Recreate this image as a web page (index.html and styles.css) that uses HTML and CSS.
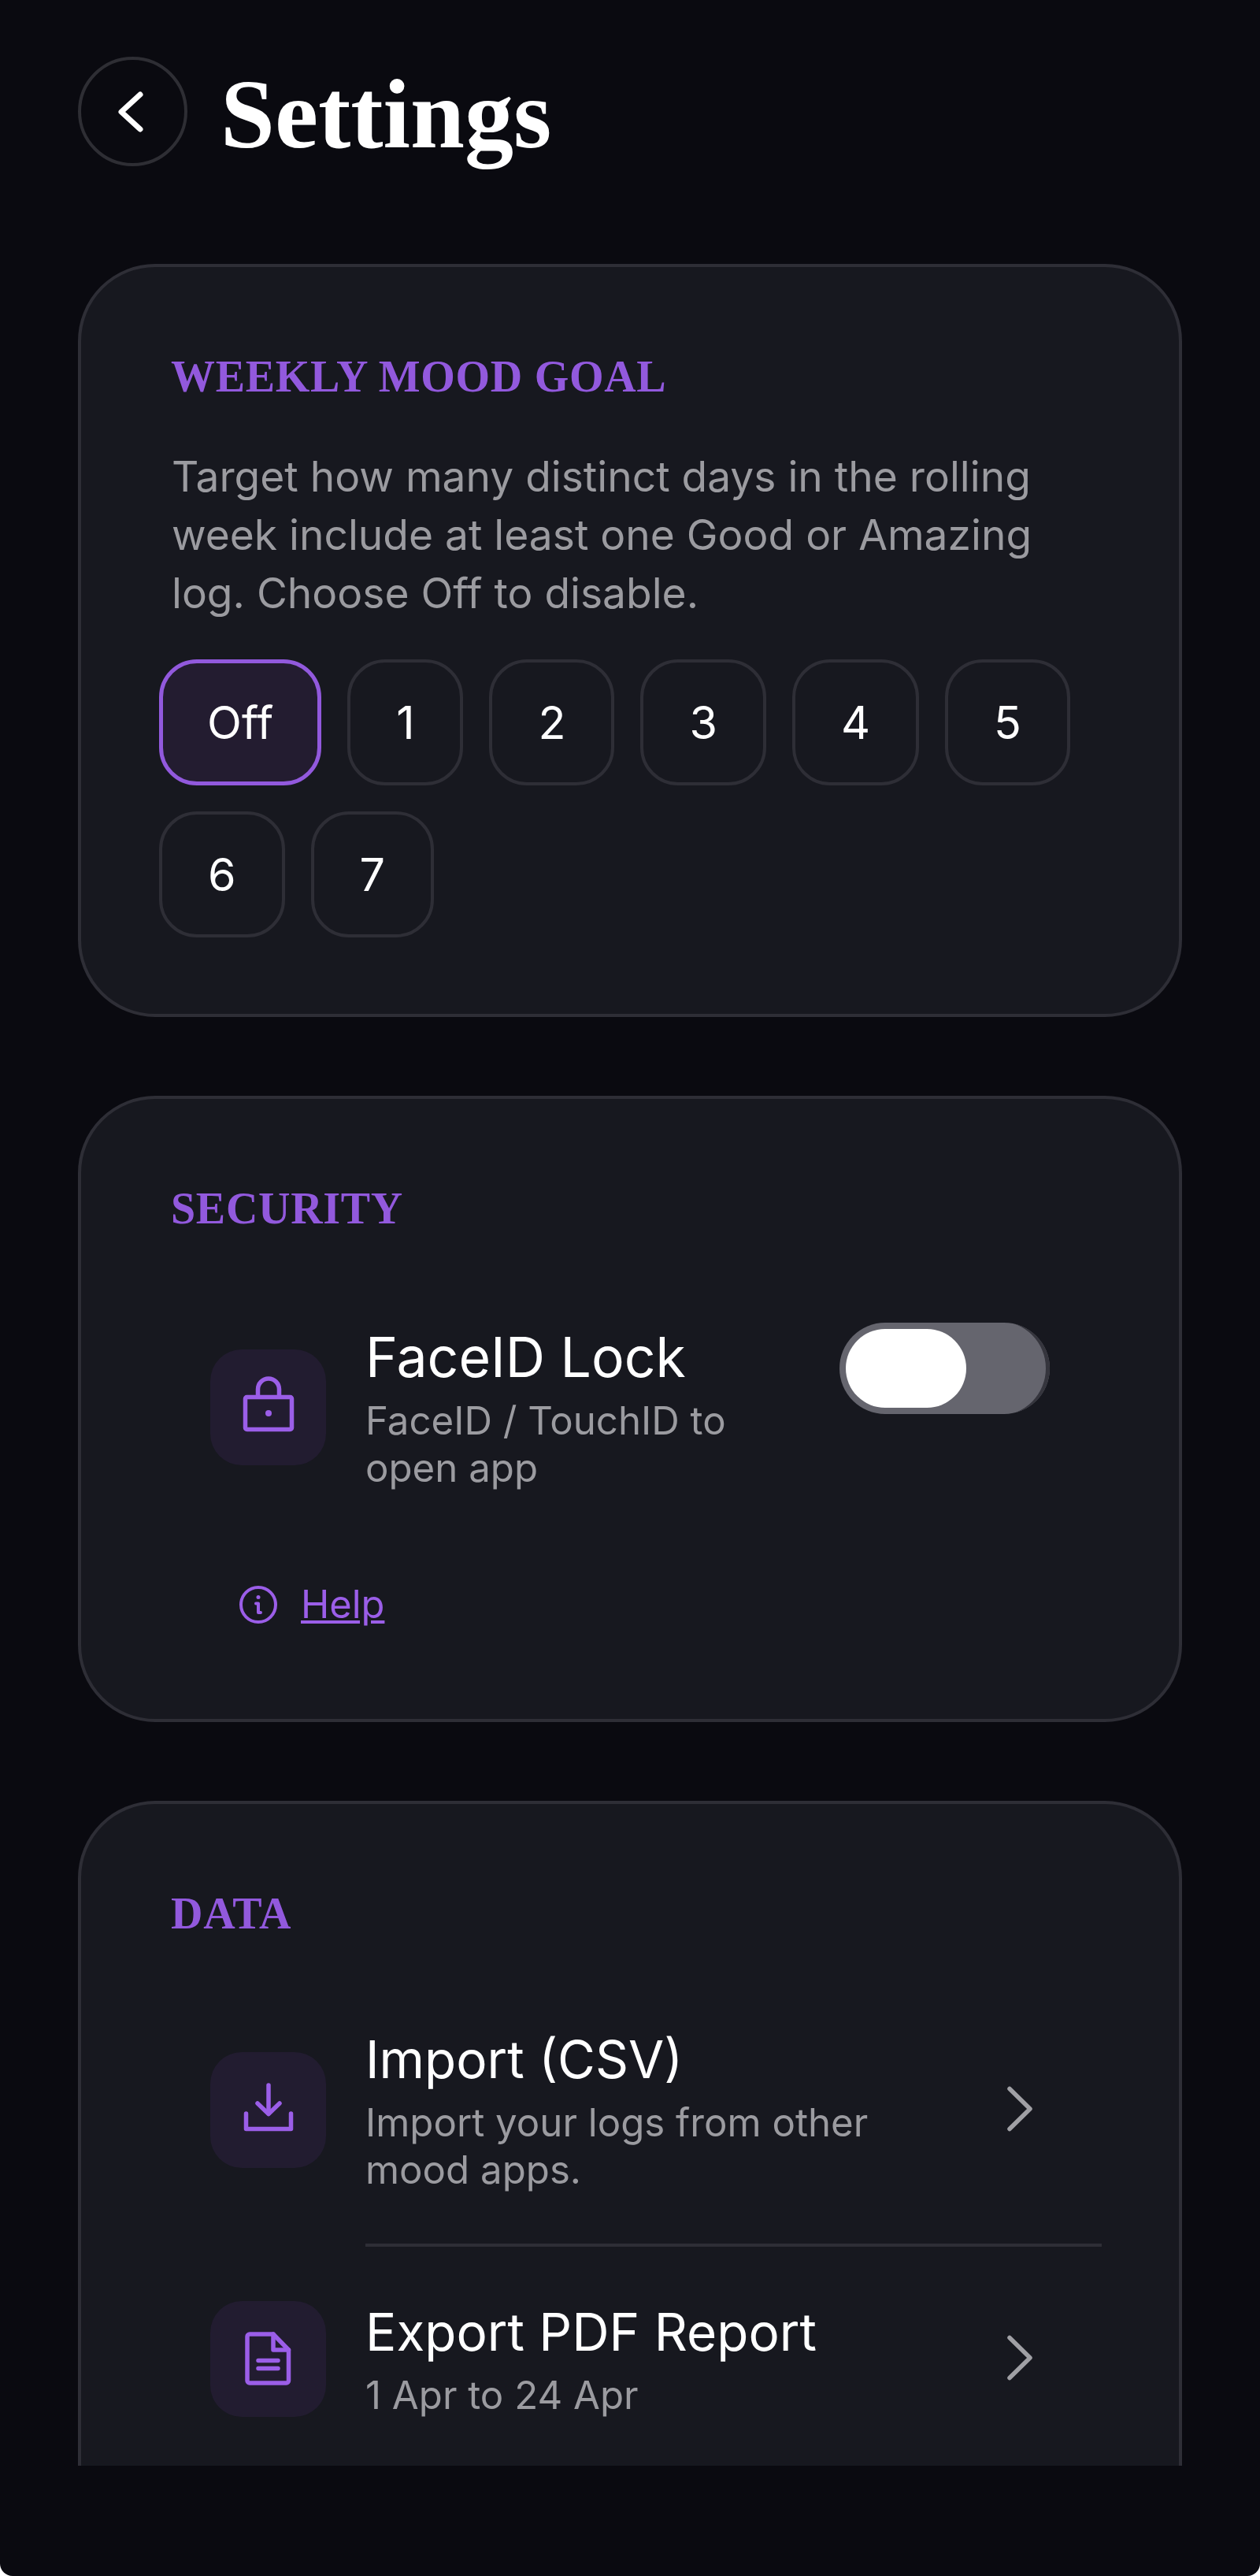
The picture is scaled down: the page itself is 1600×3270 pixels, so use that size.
FILE: index.html
```html
<!DOCTYPE html>
<html>
    <head>
        <title>Settings</title>
        <link rel="stylesheet" href="styles.css">
    </head>
    <body>
        <div class="screen">
            <div class="header">
                <a class="back">
                    <svg width="40" height="60" viewBox="0 0 40 60"><path d="M29 8L5 30L29 52" /></svg>
                </a>
                <h1>Settings</h1>
            </div>

            <div class="card goal">
                <h2>WEEKLY MOOD GOAL</h2>
                <p class="desc">Target how many distinct days in the rolling week include at least one Good or Amazing log. Choose Off to disable.</p>
                <div class="chips">
                    <a class="chip selected">Off</a>
                    <a class="chip">1</a>
                    <a class="chip">2</a>
                    <a class="chip">3</a>
                    <a class="chip">4</a>
                    <a class="chip">5</a>
                    <a class="chip">6</a>
                    <a class="chip">7</a>
                </div>
            </div>

            <div class="card security">
                <h2>SECURITY</h2>
                <div class="row toggle-row">
                    <div class="tile">
                        <svg width="80" height="80" viewBox="0 0 80 80"><rect x="10.5" y="27.5" width="59" height="41" rx="2" /><path d="M26.5 27V17.5a13.5 13.5 0 0 1 27 0V27" /><circle class="solid" cx="40" cy="48" r="4" /></svg>
                    </div>
                    <div class="text">
                        <div class="title">FaceID Lock</div>
                        <div class="sub">FaceID / TouchID to open app</div>
                    </div>
                    <div class="toggle"><div class="thumb"></div></div>
                </div>
                <a class="help">
                    <svg width="50" height="50" viewBox="0 0 50 50"><circle cx="25" cy="25" r="22" /><circle class="solid" cx="25" cy="15.5" r="2.5" /><path d="M22 23.5H25V35H28" /></svg>
                    <span>Help</span>
                </a>
            </div>

            <div class="card data">
                <h2>DATA</h2>
                <div class="row">
                    <div class="tile">
                        <svg width="80" height="80" viewBox="0 0 80 80"><path d="M40 9V45" /><path d="M26 32L40 45.5L54 32" /><path d="M11.5 45V64.5H68.5V45" /></svg>
                    </div>
                    <div class="text">
                        <div class="title">Import (CSV)</div>
                        <div class="sub">Import your logs from other mood apps.</div>
                    </div>
                    <svg class="chevron" width="40" height="60" viewBox="0 0 40 60"><path d="M10 3.5L36 29L10 54.5" /></svg>
                </div>
                <div class="divider"></div>
                <div class="row">
                    <div class="tile">
                        <svg width="80" height="80" viewBox="0 0 80 80"><path d="M16 9H46L65.5 29V68a3 3 0 0 1-3 3H16a3 3 0 0 1-3-3V12a3 3 0 0 1 3-3Z" /><path d="M46 9V29H65.5" /><path d="M27 42.5H52M27 52.5H52" /></svg>
                    </div>
                    <div class="text">
                        <div class="title">Export PDF Report</div>
                        <div class="sub">1 Apr to 24 Apr</div>
                    </div>
                    <svg class="chevron" width="40" height="60" viewBox="0 0 40 60"><path d="M10 3.5L36 29L10 54.5" /></svg>
                </div>
            </div>
        </div>
    </body>
</html>
```

FILE: styles.css
```css
html, body {
    background: #fff;
    margin: 0;
}

body {
    color: #fff;
    font-family: "Inter", sans-serif;
    height: 3270px;
    overflow: hidden;
}

.screen {
    background: #0a0a10;
    border-radius: 0 0 16px 16px;
    box-sizing: border-box;
    height: 3270px;
    padding: 72px 99px 0;
}

.header {
    align-items: center;
    display: flex;
    gap: 42px;
    height: 139px;
    margin-bottom: 124px;
}

.back {
    align-items: center;
    border: 4px solid #2e2e34;
    border-radius: 50%;
    box-sizing: border-box;
    display: flex;
    height: 139px;
    justify-content: center;
    width: 139px;
}

.back path {
    fill: none;
    stroke: #fff;
    stroke-linecap: round;
    stroke-linejoin: round;
    stroke-width: 7;
}

h1 {
    font-family: "Liberation Serif", serif;
    font-size: 124px;
    font-weight: bold;
    margin: 8px 0 0;
}

.card {
    background: #17181f;
    border: 4px solid #2e2e36;
    border-radius: 98px;
    box-sizing: border-box;
    margin-bottom: 100px;
    padding: 107px 100px 0 115px;
    width: 1402px;
}

.goal {
    height: 956px;
}

.security {
    height: 795px;
}

.data {
    border-bottom: 0;
    border-radius: 98px 98px 0 0;
    height: 844px;
}

h2 {
    color: #9259dd;
    font-family: "Liberation Serif", serif;
    font-size: 56px;
    font-weight: bold;
    letter-spacing: 0.7px;
    line-height: 64px;
    margin: 0 0 111px -1px;
}

.goal h2 {
    margin-bottom: 0;
}

.security h2 {
    margin-bottom: 113px;
}

.desc {
    color: #9b9ba0;
    font-size: 53.3px;
    line-height: 74px;
    margin: 58px 0 0;
    width: 1130px;
}

.chips {
    display: flex;
    flex-wrap: wrap;
    gap: 33px;
    margin: 47px 0 0 -16px;
}

.chip {
    align-items: center;
    border: 4px solid #2e2e36;
    border-radius: 48px;
    box-sizing: border-box;
    display: flex;
    font-size: 57.4px;
    height: 160px;
    padding: 0 58px;
}

.chip.selected {
    background: #231c30;
    border: 5px solid #9259dd;
    padding: 0 56px;
}

.row {
    align-items: center;
    display: flex;
    padding-left: 49px;
}

.tile {
    align-items: center;
    background: #221c30;
    border-radius: 40px;
    display: flex;
    flex-shrink: 0;
    height: 147px;
    justify-content: center;
    margin-right: 50px;
    width: 147px;
}

.tile path, .tile rect, .help path, .help circle {
    fill: none;
    stroke: #9b5ee8;
    stroke-linecap: round;
    stroke-linejoin: round;
    stroke-width: 5.5;
}

.help path, .help circle {
    stroke-width: 4;
}

.tile .solid, .help .solid {
    fill: #9b5ee8;
    stroke: none;
}

.text {
    flex: 1;
    padding-right: 40px;
}

.title {
    font-size: 65.6px;
    line-height: 84px;
    margin-bottom: 8px;
}

.sub {
    color: #9b9ba0;
    font-size: 49.2px;
    line-height: 60px;
}

.toggle-row .text {
    flex: none;
    padding-right: 0;
    width: 602px;
}

.toggle-row .title {
    font-size: 69.7px;
    line-height: 88px;
    margin-bottom: 6px;
}

.toggle-row .sub {
    width: 520px;
}

.toggle {
    align-self: flex-start;
    background: #65656e;
    border-radius: 58px;
    box-shadow: inset -7px 0 0 -2px #35353d;
    box-sizing: border-box;
    height: 116px;
    padding: 8px;
    width: 267px;
}

.thumb {
    background: #fff;
    border-radius: 50px;
    height: 100px;
    width: 153px;
}

.help {
    align-items: center;
    color: #9b5ee8;
    display: flex;
    font-size: 48.8px;
    gap: 29px;
    margin: 114px 0 0 85px;
}

.help span {
    text-decoration: underline;
}

.chevron {
    flex-shrink: 0;
    margin-right: 85px;
}

.chevron path {
    fill: none;
    stroke: #a0a0a5;
    stroke-linecap: round;
    stroke-linejoin: round;
    stroke-width: 5.5;
}

.divider {
    background: #2e2e36;
    height: 4px;
    margin: 64px -2px 66px 246px;
}
```
